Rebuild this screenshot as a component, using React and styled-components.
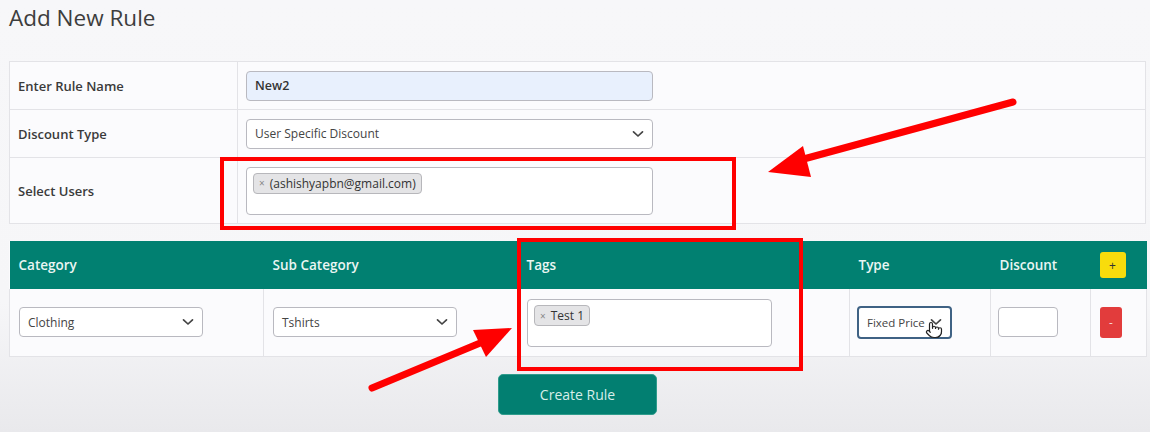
import React from 'react';
import styled, { createGlobalStyle } from 'styled-components';
import { Pointer } from 'lucide-react';

const GlobalStyle = createGlobalStyle`
  html, body {
    margin: 0;
    padding: 0;
  }
  body {
    font-family: "Open Sans", "Noto Sans", Arial, sans-serif;
    color: #333;
    background: linear-gradient(180deg, #f7f7f9 0%, #f6f6f8 70%, #e9e9ec 100%);
    min-height: 432px;
    overflow: hidden;
  }
`;

const Page = styled.div`
  position: relative;
  width: 1150px;
  height: 432px;
  box-sizing: border-box;
  padding: 3px 4px 0 9px;
`;

const Title = styled.h2`
  margin: 0 0 28px;
  font-size: 22.5px;
  font-weight: 400;
  color: #3d3d3d;
  line-height: 30px;
`;

const Table = styled.table`
  width: 1137px;
  border-collapse: collapse;
  table-layout: fixed;
  background: #fbfbfd;
  font-size: 13px;
  margin-bottom: ${p => p.$gap || 0}px;
`;

const LabelCell = styled.td`
  width: 228px;
  height: ${p => p.$h}px;
  box-sizing: border-box;
  padding: 0 8px;
  border: 1px solid #e3e3e7;
  font-weight: 600;
  color: #3a3a3a;
`;

const FieldCell = styled.td`
  box-sizing: border-box;
  padding: 0 8px;
  border: 1px solid #e3e3e7;
`;

const HeadRow = styled.tr`
  background: #018071;
  height: 48px;
`;

const HeadCell = styled.th`
  box-sizing: border-box;
  text-align: left;
  color: #eaf6f3;
  font-weight: 600;
  font-size: 13.5px;
  padding: 0 9px;
  width: ${p => p.$w}px;
`;

const BodyCell = styled.td`
  height: 67px;
  box-sizing: border-box;
  padding: 0 ${p => p.$px ?? 9}px;
  border: 1px solid #e3e3e7;
  border-top: none;
  vertical-align: ${p => p.$top ? 'top' : 'middle'};
  padding-top: ${p => p.$top ? 10 : 0}px;
`;

const TextInput = styled.div`
  width: ${p => p.$w}px;
  height: 30px;
  box-sizing: border-box;
  display: flex;
  align-items: center;
  padding: 0 8px;
  border: 1px solid #b9b9c0;
  border-radius: 4px;
  background: ${p => p.$filled ? '#e8f0fd' : '#fff'};
  font-size: 12.5px;
  font-weight: ${p => p.$filled ? 600 : 400};
  color: #333;
`;

const SelectBox = styled.div`
  position: relative;
  width: ${p => p.$w}px;
  height: ${p => p.$h || 30}px;
  box-sizing: border-box;
  display: flex;
  align-items: center;
  justify-content: space-between;
  padding: 0 8px;
  border: ${p => p.$focus ? '2px solid #3f6284' : '1px solid #b9b9c0'};
  border-radius: 4px;
  background: #fff;
  font-size: ${p => p.$fs || 12}px;
  color: #444;
`;

const Chevron = () => (
  <svg width="12" height="8" viewBox="0 0 12 8">
    <path d="M1.5 1.8 L6 6 L10.5 1.8" fill="none" stroke="#444" strokeWidth="1.7" strokeLinecap="round" strokeLinejoin="round" />
  </svg>
);

const MultiBox = styled.div`
  width: ${p => p.$w}px;
  height: 48px;
  box-sizing: border-box;
  padding: 5px 6px;
  border: 1px solid #b9b9c0;
  border-radius: 4px;
  background: #fff;
`;

const Chip = styled.span`
  display: inline-flex;
  align-items: center;
  gap: 5px;
  height: 19px;
  padding: 0 5px;
  border: 1px solid #b7b7bb;
  border-radius: 4px;
  background: #e4e4e6;
  font-size: 12px;
  color: #333;
`;

const ChipX = styled.span`
  font-size: 10px;
  color: #888;
`;

const SmallButton = styled.button`
  width: ${p => p.$w || 22}px;
  height: ${p => p.$h}px;
  border: none;
  border-radius: 3px;
  background: ${p => p.$bg};
  color: ${p => p.$fg};
  font-size: 12px;
  font-family: inherit;
  padding: 0;
  display: flex;
  align-items: center;
  justify-content: center;
`;

const Footer = styled.div`
  display: flex;
  justify-content: center;
  padding-top: 17px;
`;

const CreateButton = styled.button`
  width: 159px;
  height: 41px;
  border: 1px solid #2f9c8c;
  border-radius: 5px;
  background: #027f71;
  color: #d8eeea;
  font-family: inherit;
  font-size: 14px;
`;

const TypeWrap = styled.div`
  position: relative;
  display: inline-block;
`;

const Cursor = styled.div`
  position: absolute;
  left: 68px;
  top: 15px;
  color: #222;
`;

const Overlay = styled.svg`
  position: absolute;
  left: 0;
  top: 0;
  pointer-events: none;
`;

const Annotations = () => (
  <Overlay width="1150" height="432" viewBox="0 0 1150 432">
    <rect x="222" y="159" width="512" height="69" fill="none" stroke="#ff0000" strokeWidth="4" />
    <rect x="519" y="240" width="282" height="129" fill="none" stroke="#ff0000" strokeWidth="4" />
    <line x1="1013" y1="102" x2="800" y2="160" stroke="#ff0000" strokeWidth="7" strokeLinecap="round" />
    <polygon points="768,172 803,146 811,177" fill="#ff0000" />
    <line x1="372" y1="388" x2="485" y2="341" stroke="#ff0000" strokeWidth="7" strokeLinecap="round" />
    <polygon points="512,328 473,330 486,357" fill="#ff0000" />
  </Overlay>
);

export default function App() {
  return (
    <>
      <GlobalStyle />
      <Page>
        <Title>Add New Rule</Title>
        <Table $gap={17}>
          <tbody>
            <tr>
              <LabelCell $h={48}>Enter Rule Name</LabelCell>
              <FieldCell>
                <TextInput $w={407} $filled>New2</TextInput>
              </FieldCell>
            </tr>
            <tr>
              <LabelCell $h={48}>Discount Type</LabelCell>
              <FieldCell>
                <SelectBox $w={407}>
                  User Specific Discount
                  <Chevron />
                </SelectBox>
              </FieldCell>
            </tr>
            <tr>
              <LabelCell $h={66}>Select Users</LabelCell>
              <FieldCell>
                <MultiBox $w={407}>
                  <Chip><ChipX>×</ChipX>(ashishyapbn@gmail.com)</Chip>
                </MultiBox>
              </FieldCell>
            </tr>
          </tbody>
        </Table>
        <Table>
          <thead>
            <HeadRow>
              <HeadCell $w={254}>Category</HeadCell>
              <HeadCell $w={254}>Sub Category</HeadCell>
              <HeadCell $w={332}>Tags</HeadCell>
              <HeadCell $w={141}>Type</HeadCell>
              <HeadCell $w={100}>Discount</HeadCell>
              <HeadCell $w={56}>
                <SmallButton $w={26} $h={26} $bg="#f8dc0c" $fg="#333">+</SmallButton>
              </HeadCell>
            </HeadRow>
          </thead>
          <tbody>
            <tr>
              <BodyCell>
                <SelectBox $w={184}>Clothing<Chevron /></SelectBox>
              </BodyCell>
              <BodyCell>
                <SelectBox $w={184}>Tshirts<Chevron /></SelectBox>
              </BodyCell>
              <BodyCell $top>
                <MultiBox $w={245}>
                  <Chip><ChipX>×</ChipX>Test 1</Chip>
                </MultiBox>
              </BodyCell>
              <BodyCell $px={7}>
                <TypeWrap>
                  <SelectBox $w={95} $h={33} $fs={11.5} $focus>Fixed Price<Chevron /></SelectBox>
                  <Cursor><Pointer size={18} strokeWidth={1.6} fill="#fff" /></Cursor>
                </TypeWrap>
              </BodyCell>
              <BodyCell $px={7}>
                <TextInput $w={60} />
              </BodyCell>
              <BodyCell>
                <SmallButton $w={22} $h={31} $bg="#e23c3c" $fg="#f5d5d5">-</SmallButton>
              </BodyCell>
            </tr>
          </tbody>
        </Table>
        <Footer>
          <CreateButton>Create Rule</CreateButton>
        </Footer>
        <Annotations />
      </Page>
    </>
  );
}
